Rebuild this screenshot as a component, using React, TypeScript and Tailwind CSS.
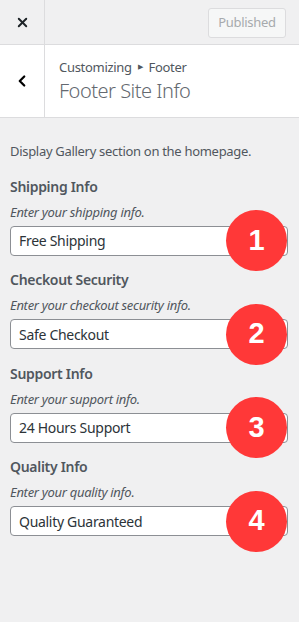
import { X, ChevronLeft } from 'lucide-react';

const FIELDS = [
  { n: 1, label: 'Shipping Info', hint: 'Enter your shipping info.', value: 'Free Shipping' },
  { n: 2, label: 'Checkout Security', hint: 'Enter your checkout security info.', value: 'Safe Checkout' },
  { n: 3, label: 'Support Info', hint: 'Enter your support info.', value: '24 Hours Support' },
  { n: 4, label: 'Quality Info', hint: 'Enter your quality info.', value: 'Quality Guaranteed' },
];

export default function App() {
  return (
    <div className="w-[299px] h-[622px] bg-[#f0f0f1] text-[#50575e] font-['Noto_Sans',sans-serif] tracking-[-0.3px] overflow-hidden">
      {/* top bar */}
      <div className="flex h-[45px] border-b border-[#dcdcde]">
        <button className="w-[45px] h-full flex items-center justify-center border-r border-[#dcdcde] text-[#1d2327]">
          <X className="w-[15px] h-[15px]" strokeWidth={3} />
        </button>
        <div className="flex-1 flex items-start justify-end pt-[8px] pr-[13px]">
          <button className="h-[30px] w-[78px] rounded-[3px] border border-[#dcdcde] bg-[#f6f7f7] text-[13px] text-[#a7aaad]">
            Published
          </button>
        </div>
      </div>

      {/* section header */}
      <div className="flex h-[73px] bg-white border-b border-[#dcdcde]">
        <button className="w-[45px] h-full flex items-center justify-center border-r border-[#dcdcde] text-black">
          <ChevronLeft className="w-[18px] h-[18px]" strokeWidth={3} />
        </button>
        <div className="flex-1 pl-[14px] pt-[13px]">
          <div className="flex items-center text-[13px] leading-[18px] text-[#50575e]">
            <span>Customizing</span>
            <span className="mx-[6px] text-[7px]">▶</span>
            <span>Footer</span>
          </div>
          <div className="mt-[2px] text-[20px] leading-[26px] font-light text-[#646970] tracking-[-0.5px]">Footer Site Info</div>
        </div>
      </div>

      {/* controls */}
      <div className="pl-[10px] pr-[11px] pt-[24px]">
        <p className="text-[13px] leading-[18px]">Display Gallery section on the homepage.</p>
        <div className="mt-[16.5px] flex flex-col gap-[14.5px]">
          {FIELDS.map((f) => (
            <div key={f.n}>
              <div className="text-[14px] leading-[20px] font-semibold">{f.label}</div>
              <div className="mt-[6px] text-[13px] leading-[18px] italic">{f.hint}</div>
              <div className="relative mt-[5px]">
                <input
                  readOnly
                  value={f.value}
                  className="w-full h-[30px] rounded-[4px] border border-[#8c8f94] bg-white px-[8px] text-[14px] text-[#2c3338] tracking-[-0.3px] outline-none"
                />
                <div className="absolute right-[1px] top-[-15.5px] w-[61px] h-[61px] rounded-full bg-[#ff3838] flex items-center justify-center text-white text-[29px] font-bold tracking-normal font-['Liberation_Sans',sans-serif]">
                  {f.n}
                </div>
              </div>
            </div>
          ))}
        </div>
      </div>
    </div>
  );
}
